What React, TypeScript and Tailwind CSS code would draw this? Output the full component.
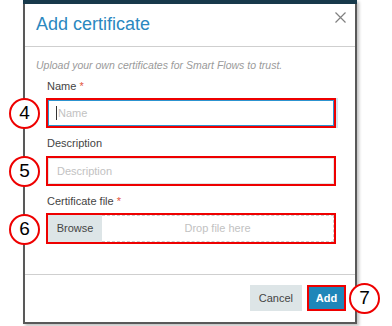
import React from 'react';

const font = { fontFamily: '"Liberation Sans", Arial, sans-serif' };

const Marker: React.FC<{ n: number; className: string }> = ({ n, className }) => (
    <div className={`absolute z-10 flex items-center justify-center w-[31px] h-[31px] rounded-full border-2 border-[#ee0000] bg-white text-[19px] text-black ${className}`}>
        {n}
    </div>
);

const Label: React.FC<{ text: string; required?: boolean; className?: string }> = ({ text, required, className }) => (
    <div className={`h-[14px] leading-[14px] text-[11px] text-[#444] ${className ?? ''}`}>
        {text}
        {required && <span className="text-[#e2553f]"> *</span>}
    </div>
);

const App: React.FC = () => {
    return (
        <div className="relative w-[392px] h-[326px] bg-white overflow-hidden" style={font}>
            <div className="ml-[23px] w-[334px] border-x-2 border-b-2 border-[#595959] bg-white shadow-[2px_2px_3px_rgba(0,0,0,0.25)]">
                <div className="h-[4px] -mx-[2px] bg-[#17394b]" />

                {/* header */}
                <div className="h-[43px] flex justify-between items-start pl-[11px] pr-[9px] border-b border-[#cfcfcf]">
                    <span className="pt-[8px] leading-[24px] text-[18px] text-[#2b88bf]">Add certificate</span>
                    <svg width="11" height="11" viewBox="0 0 11 11" className="mt-[8px]">
                        <path d="M0.5 0.5 L10.5 10.5 M10.5 0.5 L0.5 10.5" stroke="#808080" strokeWidth="1.2" />
                    </svg>
                </div>

                {/* body */}
                <div className="pt-[11px] pb-[30px] border-b border-[#cfcfcf]">
                    <div className="pl-[11px] h-[14px] leading-[14px] text-[10.5px] italic text-[#9a9a9a]">
                        Upload your own certificates for Smart Flows to trust.
                    </div>
                    <div className="pl-[21px] w-[311px]">
                        <Label text="Name" required className="mt-[7px] pl-[1px]" />
                        <div className="relative mt-[5px] border-2 border-[#ee0000] shadow-[2px_0_0_#d3e6f2]">
                            <Marker n={4} className="-left-[39px] top-[-2px]" />
                            <div className="h-[26px] flex items-center pl-[7px] border border-[#2c93cf] text-[11px] text-[#c2c2c2]">
                                <span className="w-[1px] h-[14px] bg-[#333] mr-[1px]" />
                                Name
                            </div>
                        </div>

                        <Label text="Description" className="mt-[8px] pl-[1px]" />
                        <div className="relative mt-[6px] border-2 border-[#ee0000]">
                            <Marker n={5} className="-left-[39px] top-[-2px]" />
                            <div className="h-[26px] flex items-center pl-[8px] border border-[#e2e2e2] text-[11px] text-[#c2c2c2]">
                                Description
                            </div>
                        </div>

                        <Label text="Certificate file" required className="mt-[8px] pl-[1px]" />
                        <div className="relative mt-[5px] border-2 border-[#ee0000]">
                            <Marker n={6} className="-left-[39px] top-[-1px]" />
                            <div className="h-[27px] flex">
                                <div className="w-[54px] flex items-center justify-center bg-[#dde5e7] text-[11px] text-[#444]">
                                    Browse
                                </div>
                                <div className="flex-1 flex items-center justify-center border border-l-0 border-dashed border-[#cccccc] text-[11px] text-[#c2c2c2]">
                                    Drop file here
                                </div>
                            </div>
                        </div>
                    </div>
                </div>

                {/* footer */}
                <div className="h-[47px] flex justify-end items-start gap-[5px] pt-[10px] pr-[9px]">
                    <button className="h-[26px] px-[9px] bg-[#dde5e7] text-[11px] text-[#444]">Cancel</button>
                    <div className="relative flex border-2 border-[#ee0000]">
                        <button className="h-[22px] w-[35px] bg-[#1e86b9] text-[11px] font-bold text-white">Add</button>
                        <Marker n={7} className="left-full ml-[5px] top-[-4px]" />
                    </div>
                </div>
            </div>
        </div>
    );
};

export default App;
